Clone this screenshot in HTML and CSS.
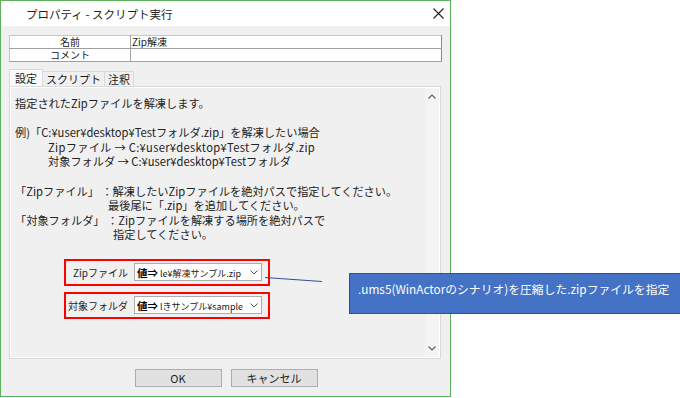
FILE: index.html
```html
<!DOCTYPE html>
<html lang="ja">
<head>
  <meta charset="UTF-8">
  <meta name="viewport" content="width=device-width, initial-scale=1.0">
  <title>プロパティ - スクリプト実行</title>
  <link rel="stylesheet" href="styles.css">
</head>
<body>
  <div class="stage">
    <div class="dialog">
      <div class="titlebar">
        <span class="title">プロパティ - スクリプト実行</span>
        <svg class="close" width="11" height="11" viewBox="0 0 11 11">
          <path d="M0.5 0.5L10.5 10.5M10.5 0.5L0.5 10.5" stroke="#222" stroke-width="1.1" fill="none"/>
        </svg>
      </div>

      <div class="main">
        <table class="props">
          <tr>
            <td class="key">名前</td>
            <td class="val">Zip解凍</td>
          </tr>
          <tr>
            <td class="key">コメント</td>
            <td class="val"></td>
          </tr>
        </table>

        <div class="tabs">
          <div class="tab active">設定</div>
          <div class="tab">スクリプト</div>
          <div class="tab">注釈</div>
        </div>

        <div class="panel">
          <div class="inner">
            <div class="content">
              <div class="desc">
                <div class="line">指定されたZipファイルを解凍します。</div>
                <div class="line blank"></div>
                <div class="line">例)「C:¥user¥desktop¥Testフォルダ.zip」を解凍したい場合</div>
                <div class="line ind1 wide">Zipファイル → C:¥user¥desktop¥Testフォルダ.zip</div>
                <div class="line ind1">対象フォルダ → C:¥user¥desktop¥Testフォルダ</div>
                <div class="line blank"></div>
                <div class="line">「Zipファイル」 ：解凍したいZipファイルを絶対パスで指定してください。</div>
                <div class="line ind2">最後尾に「.zip」を追加してください。</div>
                <div class="line">「対象フォルダ」 ：Zipファイルを解凍する場所を絶対パスで</div>
                <div class="line ind3">指定してください。</div>
              </div>

              <div class="fields">
                <div class="field">
                  <span class="flabel">Zipファイル</span>
                  <div class="combo">
                    <span class="ctext"><b>値⇒</b> le¥解凍サンプル.zip</span>
                    <svg class="chev" width="8" height="5" viewBox="0 0 8 5"><path d="M0.5 0.5L4 4L7.5 0.5" stroke="#555" fill="none"/></svg>
                  </div>
                </div>
                <div class="field">
                  <span class="flabel">対象フォルダ</span>
                  <div class="combo">
                    <span class="ctext"><b>値⇒</b> lきサンプル¥sample</span>
                    <svg class="chev" width="8" height="5" viewBox="0 0 8 5"><path d="M0.5 0.5L4 4L7.5 0.5" stroke="#555" fill="none"/></svg>
                  </div>
                </div>
              </div>
            </div>

            <div class="scrollbar">
              <svg width="8" height="5" viewBox="0 0 8 5"><path d="M0.5 4.5L4 1L7.5 4.5" stroke="#606060" stroke-width="1.2" fill="none"/></svg>
              <svg width="8" height="5" viewBox="0 0 8 5"><path d="M0.5 0.5L4 4L7.5 0.5" stroke="#606060" stroke-width="1.2" fill="none"/></svg>
            </div>
          </div>
        </div>

        <div class="buttons">
          <button type="button" class="btn">OK</button>
          <button type="button" class="btn">キャンセル</button>
        </div>
      </div>
    </div>

    <!-- 吹き出しと引き出し線 -->
    <svg class="connector" width="680" height="398">
      <line x1="265" y1="277.5" x2="322" y2="281.5" stroke="#2f528f" stroke-width="1"/>
    </svg>
    <div class="callout">.ums5(WinActorのシナリオ)を圧縮した.zipファイルを指定</div>
  </div>
</body>
</html>
```

FILE: styles.css
```css
html, body {
  margin: 0;
  padding: 0;
  background-color: #fff;
  font-family: "Noto Sans CJK JP", sans-serif;
  color: #1a1a1a;
}
.stage {
  position: relative;
  width: 680px;
  height: 398px;
  overflow: hidden;
}
.dialog {
  width: 451px;
  height: 397px;
  box-sizing: border-box;
  border: 1px solid #5fb35f;
  background-color: #f0f0f0;
  display: flex;
  flex-direction: column;
}
.titlebar {
  height: 25px;
  flex: none;
  background-color: #fff;
  display: flex;
  align-items: center;
  justify-content: space-between;
  padding: 0 6px 0 25px;
}
.title {
  font-size: 11.5px;
  color: #222;
}
.main {
  flex: 1;
  display: flex;
  flex-direction: column;
  padding: 9px 7px 0 8px;
}
.props {
  width: 433px;
  border-collapse: collapse;
  background-color: #fff;
  font-size: 10px;
}
.props td {
  height: 12px;
  line-height: 12px;
  padding: 0;
  border: 1px solid #a0a0a0;
  white-space: nowrap;
  overflow: hidden;
}
.props tr:first-child td {
  border-top-color: #c8c8c8;
}
.props .key {
  width: 120px;
  text-align: center;
  border-left-color: #c8c8c8;
}
.props .val {
  padding-left: 1px;
  border-right-color: #8a8a8a;
}
.tabs {
  display: flex;
  align-items: flex-end;
  height: 17px;
  margin-top: 7px;
}
.tab {
  height: 15px;
  line-height: 15px;
  box-sizing: border-box;
  font-size: 11px;
  padding: 0 3px;
  border: 1px solid #d9d9d9;
  border-bottom: none;
  margin-right: -1px;
  background-color: #f0f0f0;
  white-space: nowrap;
}
.tab.active {
  height: 17px;
  line-height: 17px;
  background-color: #fbfbfb;
  padding: 0 5px;
}
.panel {
  width: 432px;
  height: 273px;
  box-sizing: border-box;
  border: 1px solid #d9d9d9;
  flex: none;
}
.inner {
  height: 100%;
  box-sizing: border-box;
  border: 1px solid #fff;
  display: flex;
}
.content {
  flex: 1;
  padding: 8px 0 0 4px;
}
.desc {
  font-size: 11.2px;
  color: #222;
}
.line {
  height: 14.6px;
  line-height: 14.6px;
  white-space: pre;
}
.ind1 { padding-left: 33px; }
.ind2 { padding-left: 93px; }
.ind3 { padding-left: 98px; }
.wide { letter-spacing: 0.3px; }
.fields {
  display: flex;
  flex-direction: column;
  gap: 6px;
  margin-top: 17px;
  margin-left: 49px;
}
.field {
  width: 206px;
  height: 27px;
  box-sizing: border-box;
  border: 2px solid #ff0000;
  display: flex;
  align-items: center;
  padding-right: 6px;
}
.flabel {
  width: 62px;
  text-align: right;
  font-size: 10px;
  color: #222;
  margin-right: 6px;
  flex: none;
  white-space: nowrap;
}
.combo {
  width: 128px;
  height: 18px;
  box-sizing: border-box;
  border: 1px solid #adadad;
  background-color: #fff;
  display: flex;
  align-items: center;
  justify-content: space-between;
  padding: 0 3px 0 2px;
}
.ctext {
  font-size: 9px;
  white-space: nowrap;
}
.ctext b {
  font-size: 10.5px;
  color: #000;
}
.chev {
  flex: none;
  margin-left: 2px;
}
.scrollbar {
  width: 14px;
  flex: none;
  background-color: #f4f4f4;
  display: flex;
  flex-direction: column;
  justify-content: space-between;
  align-items: center;
  padding: 6px 0 6px;
  box-sizing: border-box;
}
.buttons {
  display: flex;
  justify-content: center;
  gap: 9px;
  margin-top: 10px;
}
.btn {
  width: 87px;
  height: 18px;
  padding: 0;
  font-family: "Noto Sans CJK JP", sans-serif;
  font-size: 11px;
  line-height: 16px;
  color: #222;
  background-color: #e1e1e1;
  border: 1px solid #adadad;
}
.connector {
  position: absolute;
  left: 0;
  top: 0;
  pointer-events: none;
}
.callout {
  position: absolute;
  left: 349px;
  top: 273px;
  width: 345px;
  height: 41px;
  box-sizing: border-box;
  background-color: #4472c4;
  border: 1px solid #2f528f;
  color: #fff;
  font-size: 11.8px;
  line-height: 14px;
  padding: 8px 0 0 8px;
  white-space: nowrap;
}
```
